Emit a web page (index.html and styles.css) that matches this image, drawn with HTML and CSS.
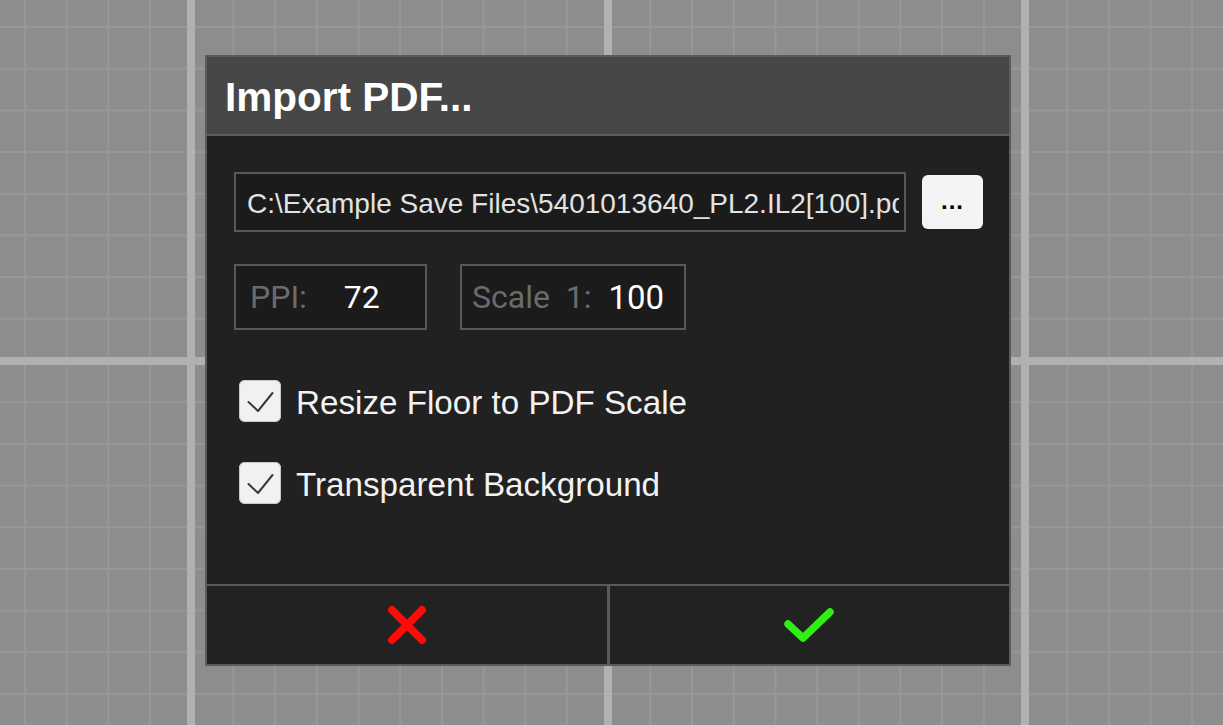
FILE: index.html
```html
<!DOCTYPE html>
<html>
<head>
<meta charset="utf-8">
<link rel="stylesheet" href="styles.css">
</head>
<body>
<div class="dialog">
  <div class="titlebar"><h1 class="title">Import PDF...</h1></div>
  <div class="content">
    <div class="file-row">
      <div class="file-input"><span class="file-text">C:\Example Save Files\5401013640_PL2.IL2[100].pdf</span></div>
      <button class="browse">...</button>
    </div>
    <div class="num-row">
      <div class="num-box ppi"><span class="lbl">PPI:</span><span class="val">72</span></div>
      <div class="num-box scale"><span class="lbl">Scale&nbsp; 1:</span><span class="val">100</span></div>
    </div>
    <div class="check-row">
      <span class="checkbox"><svg viewBox="0 0 42 42" width="42" height="42"><path d="M9.5 22 L19 31 L33.5 13" fill="none" stroke="#3a3a3a" stroke-width="2" stroke-linecap="round" stroke-linejoin="round"/></svg></span>
      <span class="check-label">Resize Floor to PDF Scale</span>
    </div>
    <div class="check-row second">
      <span class="checkbox"><svg viewBox="0 0 42 42" width="42" height="42"><path d="M9.5 22 L19 31 L33.5 13" fill="none" stroke="#3a3a3a" stroke-width="2" stroke-linecap="round" stroke-linejoin="round"/></svg></span>
      <span class="check-label">Transparent Background</span>
    </div>
  </div>
  <div class="footer">
    <button class="foot-btn cancel"><svg viewBox="0 0 40 40" width="40" height="40"><path d="M5 5 L35 35 M35 5 L5 35" stroke="#ff0a0a" stroke-width="8" stroke-linecap="round"/></svg></button>
    <div class="divider"></div>
    <button class="foot-btn ok"><svg viewBox="0 0 52 36" width="52" height="36"><path d="M5 17 L20 31 L47 5" fill="none" stroke="#2ef012" stroke-width="7.5" stroke-linecap="round" stroke-linejoin="round"/></svg></button>
  </div>
</div>
</body>
</html>
```
FILE: styles.css
```css
html, body {
  margin: 0;
  padding: 0;
}
body {
  width: 1223px;
  height: 725px;
  overflow: hidden;
  background-color: #8d8d8d;
  background-image:
    linear-gradient(to right, #b1b1b1 0, #b1b1b1 8px, transparent 8px),
    linear-gradient(to bottom, #b1b1b1 0, #b1b1b1 8px, transparent 8px),
    linear-gradient(to right, #979797 0, #979797 2px, transparent 2px),
    linear-gradient(to bottom, #979797 0, #979797 2px, transparent 2px);
  background-size: 417px 100%, 100% 417px, 41.7px 100%, 100% 41.7px;
  background-position: 187px 0, 0 357px, 24px 0, 0 26px;
  font-family: "Liberation Sans", Arial, sans-serif;
  padding-top: 55px;
  padding-left: 205px;
  box-sizing: border-box;
}
.dialog {
  width: 806px;
  height: 611px;
  box-sizing: border-box;
  border: 2px solid #5b5b5b;
  background: #212121;
  display: flex;
  flex-direction: column;
}
.titlebar {
  height: 77px;
  background: #474747;
  border-bottom: 2px solid #5e5e5e;
  display: flex;
  align-items: center;
  padding-left: 18px;
  flex-shrink: 0;
}
.title {
  margin: 0;
  color: #ffffff;
  font-weight: bold;
  font-size: 40.5px;
  line-height: 1;
  padding-top: 3px;
}
.content {
  flex: 1;
  padding: 36px 26px 0 27px;
}
.file-row {
  display: flex;
  align-items: center;
  gap: 16px;
}
.file-input {
  width: 672px;
  height: 60px;
  box-sizing: border-box;
  border: 2px solid #585858;
  background: #1b1b1b;
  display: flex;
  align-items: center;
  padding: 3px 5px 0 11px;
  overflow: hidden;
  white-space: nowrap;
}
.file-text {
  color: #e2e2e2;
  font-size: 28px;
  overflow: hidden;
  display: block;
  width: 100%;
}
.browse {
  width: 61px;
  height: 54px;
  border: none;
  border-radius: 6px;
  background: #f4f4f4;
  color: #000;
  font-family: "Liberation Sans", Arial, sans-serif;
  font-weight: bold;
  font-size: 24px;
  padding: 0 0 2px 0;
  letter-spacing: 1px;
}
.num-row {
  display: flex;
  gap: 33px;
  margin-top: 32px;
}
.num-box {
  height: 66px;
  box-sizing: border-box;
  border: 2px solid #585858;
  background: #1b1b1b;
  display: flex;
  align-items: center;
  font-family: Roboto, "Liberation Sans", sans-serif;
  font-size: 32px;
}
.ppi {
  width: 193px;
  padding-left: 14px;
}
.scale {
  width: 226px;
  padding-left: 10px;
}
.lbl {
  color: #6b6b6b;
}
.val {
  color: #ffffff;
}
.ppi .val {
  margin-left: 37px;
}
.scale .val {
  margin-left: 17px;
  font-size: 33px;
}
.check-row {
  display: flex;
  align-items: center;
  margin-top: 50px;
  margin-left: 5px;
}
.check-row.second {
  margin-top: 40px;
}
.checkbox {
  width: 42px;
  height: 42px;
  border-radius: 6px;
  background: #f1f1f1;
  box-shadow: inset 0 0 0 1px #c8c8c8;
  display: block;
  flex-shrink: 0;
}
.checkbox svg {
  display: block;
}
.check-label {
  color: #f2f2f2;
  font-size: 33.2px;
  margin-left: 15px;
  padding-top: 3px;
}
.footer {
  height: 78px;
  flex-shrink: 0;
  border-top: 2px solid #5a5a5a;
  display: flex;
}
.foot-btn {
  flex: 1;
  background: #222222;
  border: none;
  padding: 0;
  display: flex;
  align-items: center;
  justify-content: center;
}
.foot-btn svg {
  display: block;
}
.divider {
  width: 3px;
  background: #5a5a5a;
}
```
